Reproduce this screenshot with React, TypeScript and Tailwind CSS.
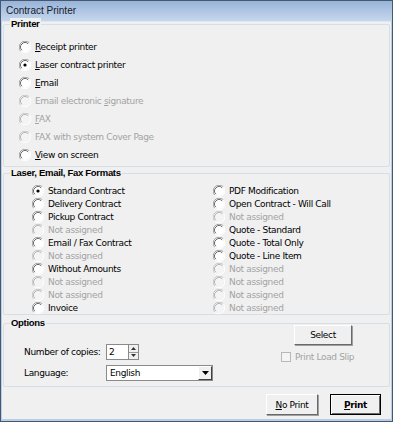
import React from "react";

type Item = { label: React.ReactNode; checked?: boolean; disabled?: boolean };

function Radio({ checked, disabled }: { checked?: boolean; disabled?: boolean }) {
  const outerDark = disabled ? "#c6c6c6" : "#a0a0a0";
  const innerDark = disabled ? "#b4b4b4" : "#696969";
  return (
    <svg width="12" height="12" viewBox="0 0 12 12" className="shrink-0">
      <circle cx="6" cy="6" r="5" fill={disabled ? "#f4f4f4" : "#ffffff"} />
      <path d="M10.24 1.76 A6 6 0 0 0 1.76 10.24" stroke={outerDark} strokeWidth="1" fill="none" />
      <path d="M9.18 2.82 A4.5 4.5 0 0 0 2.82 9.18" stroke={innerDark} strokeWidth="1" fill="none" />
      <path d="M10.24 1.76 A6 6 0 0 1 1.76 10.24" stroke="#ffffff" strokeWidth="1" fill="none" />
      {checked && <circle cx="6" cy="6" r="1.6" fill="#000" />}
    </svg>
  );
}

function RadioRow({ item, h }: { item: Item; h: string }) {
  return (
    <div className={`flex items-center gap-[4px] ${h}`}>
      <Radio checked={item.checked} disabled={item.disabled} />
      <span className={item.disabled ? "text-[#a3a3a3]" : "text-black"}>{item.label}</span>
    </div>
  );
}

function Group({ title, className, children }: { title: string; className: string; children: React.ReactNode }) {
  return (
    <div className={`relative border border-[#d5dfe5] rounded-[2px] ${className}`}>
      <span className="absolute left-[6px] top-[-7px] bg-[#f0f0f0] px-[1px] font-['Liberation_Sans',Arial,sans-serif] font-bold text-[9.5px] leading-[12px] tracking-[-0.3px] text-black">
        {title}
      </span>
      {children}
    </div>
  );
}

const printerItems: Item[] = [
  { label: (<><u>R</u>eceipt printer</>) },
  { label: (<><u>L</u>aser contract printer</>), checked: true },
  { label: (<><u>E</u>mail</>) },
  { label: (<>Email electronic <u>s</u>ignature</>), disabled: true },
  { label: (<><u>F</u>AX</>), disabled: true },
  { label: "FAX with system Cover Page", disabled: true },
  { label: (<><u>V</u>iew on screen</>) },
];

const leftFormats: Item[] = [
  { label: "Standard Contract", checked: true },
  { label: "Delivery Contract" },
  { label: "Pickup Contract" },
  { label: "Not assigned", disabled: true },
  { label: "Email / Fax Contract" },
  { label: "Not assigned", disabled: true },
  { label: "Without Amounts" },
  { label: "Not assigned", disabled: true },
  { label: "Not assigned", disabled: true },
  { label: "Invoice" },
];

const rightFormats: Item[] = [
  { label: "PDF Modification" },
  { label: "Open Contract - Will Call" },
  { label: "Not assigned", disabled: true },
  { label: "Quote - Standard" },
  { label: "Quote - Total Only" },
  { label: "Quote - Line Item" },
  { label: "Not assigned", disabled: true },
  { label: "Not assigned", disabled: true },
  { label: "Not assigned", disabled: true },
  { label: "Not assigned", disabled: true },
];

export default function App() {
  return (
    <div className="w-[393px] h-[422px] flex flex-col bg-[#b9cde6] border border-[#45586e] font-['DejaVu_Sans',Verdana,sans-serif] text-[9px] tracking-[-0.35px] leading-[12px] text-black overflow-hidden">
      {/* Title bar */}
      <div className="h-[20px] shrink-0 flex items-center pl-[5px] bg-gradient-to-b from-[#98b4d9] to-[#c6d7ed] font-['Liberation_Sans',Arial,sans-serif] tracking-normal text-[10px] text-[#14202e]">
        Contract Printer
      </div>
      {/* Client area */}
      <div className="flex-1 mx-[1px] mb-[2px] border-t border-[#dfe7f1] bg-[#f0f0f0] flex flex-col pl-[1px] pr-[1px] pt-[2px]">
        {/* Printer group */}
        <Group title="Printer" className="h-[143px] pt-[13px] pl-[15px]">
          <div className="flex flex-col">
            {printerItems.map((it, i) => (
              <RadioRow key={i} item={it} h="h-[18px]" />
            ))}
          </div>
        </Group>

        {/* Formats group */}
        <Group title="Laser, Email, Fax Formats" className="mt-[6px] h-[142px] pt-[10px] pl-[28px]">
          <div className="flex">
            <div className="w-[181px] flex flex-col">
              {leftFormats.map((it, i) => (
                <RadioRow key={i} item={it} h="h-[13px]" />
              ))}
            </div>
            <div className="flex flex-col">
              {rightFormats.map((it, i) => (
                <RadioRow key={i} item={it} h="h-[13px]" />
              ))}
            </div>
          </div>
        </Group>

        {/* Options group */}
        <Group title="Options" className="mt-[8px] h-[64px] flex">
          <div className="flex flex-col pl-[20px] pt-[20px] gap-[5px]">
            <div className="flex items-center h-[16px]">
              <span className="w-[82px]">Number of copies:</span>
              <div className="flex h-[16px]">
                <div className="w-[22px] h-[16px] bg-white border border-[#8a8a8a] border-r-0 flex items-center pl-[2px]">2</div>
                <div className="w-[11px] h-[16px] flex flex-col border border-[#8a8a8a] bg-[#f0f0f0]">
                  <div className="flex-1 flex items-center justify-center border-b border-[#9a9a9a]">
                    <svg width="5" height="3" viewBox="0 0 5 3"><path d="M2.5 0 L5 3 L0 3 Z" fill="#333" /></svg>
                  </div>
                  <div className="flex-1 flex items-center justify-center">
                    <svg width="5" height="3" viewBox="0 0 5 3"><path d="M0 0 L5 0 L2.5 3 Z" fill="#333" /></svg>
                  </div>
                </div>
              </div>
            </div>
            <div className="flex items-center h-[16px]">
              <span className="w-[82px]">Language:</span>
              <div className="w-[107px] h-[16px] bg-white border border-[#8a8a8a] flex items-center justify-between pl-[3px]">
                <span>English</span>
                <div className="w-[14px] h-[14px] bg-[#f0f0f0] border-r border-b border-[#404040] border-t border-l border-t-white border-l-white flex items-center justify-center">
                  <svg width="7" height="4" viewBox="0 0 7 4"><path d="M0 0 L7 0 L3.5 4 Z" fill="#000" /></svg>
                </div>
              </div>
            </div>
          </div>
          <div className="ml-auto mr-[33px] w-[75px] flex flex-col items-start pt-[1px]">
            <button className="ml-[13px] w-[58px] h-[20px] bg-[#f0f0f0] border border-t-white border-l-white border-r-[#696969] border-b-[#696969] shadow-[1px_1px_0_#a0a0a0] text-[9px] leading-[12px] text-black">
              Select
            </button>
            <div className="mt-[6px] flex items-center gap-[4px] whitespace-nowrap text-[#a3a3a3]">
              <span className="shrink-0 w-[10px] h-[10px] border border-[#b8b8b8] bg-[#f4f4f4]" />
              <span>Print Load Slip</span>
            </div>
          </div>
        </Group>

        {/* Buttons */}
        <div className="flex justify-end gap-[12px] pr-[9px] mt-[7px]">
          <button className="w-[52px] h-[21px] bg-[#f0f0f0] border border-t-white border-l-white border-r-[#696969] border-b-[#696969] shadow-[1px_1px_0_#a0a0a0] text-[9px] text-black">
            <u>N</u>o Print
          </button>
          <button className="w-[51px] h-[21px] bg-[#f0f0f0] border border-black shadow-[inset_1px_1px_0_#fff,inset_-1px_-1px_0_#696969] text-[9px] font-bold text-black">
            <u>P</u>rint
          </button>
        </div>
      </div>
    </div>
  );
}
